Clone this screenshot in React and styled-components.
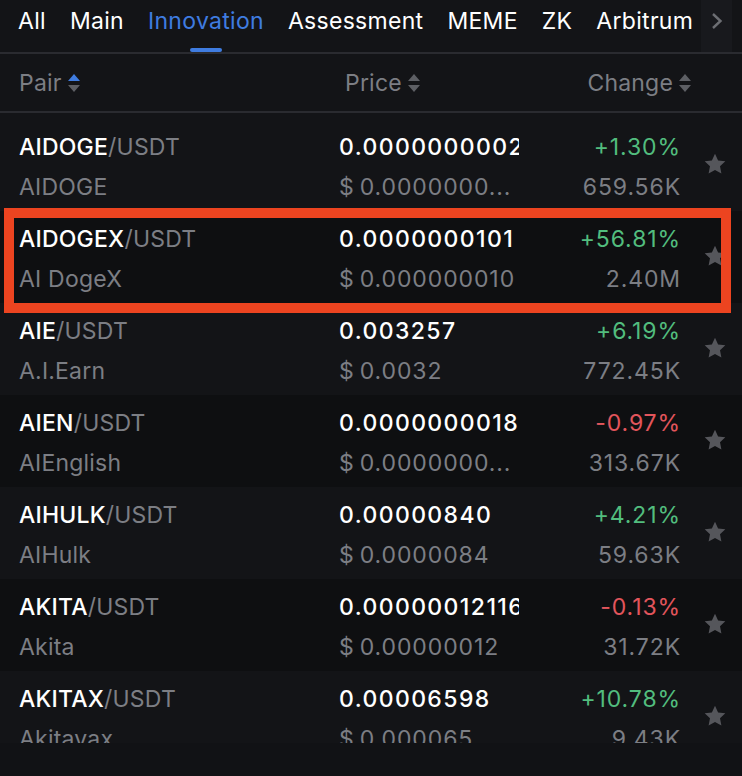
import React from "react";
import styled, { createGlobalStyle } from "styled-components";

const GlobalStyle = createGlobalStyle`
  html, body {
    margin: 0;
    padding: 0;
    background: #131417;
  }
  body {
    font-family: Inter, "Noto Sans", "Liberation Sans", sans-serif;
    -webkit-font-smoothing: antialiased;
  }
`;

const Panel = styled.div`
  width: 742px;
  height: 776px;
  background: #131417;
  color: #ffffff;
  display: flex;
  flex-direction: column;
  overflow: hidden;
`;

const TabBar = styled.div`
  display: flex;
  height: 52px;
  border-bottom: 2px solid #2a2b30;
  flex-shrink: 0;
`;

const TabList = styled.div`
  display: flex;
  gap: 24px;
  padding-left: 18px;
  flex: 1;
  overflow: hidden;
  white-space: nowrap;
`;

const Tab = styled.div`
  position: relative;
  font-size: 23px;
  line-height: 28px;
  padding-top: 7px;
  height: 52px;
  box-sizing: border-box;
  flex-shrink: 0;
  color: ${(p) => (p.$active ? "#3f7ce0" : "#ffffff")};
  letter-spacing: 0.3px;
`;

const TabMark = styled.span`
  position: absolute;
  left: 50%;
  bottom: 0;
  width: 32px;
  height: 4px;
  margin-left: -16px;
  border-radius: 2px;
  background: #3f7ce0;
`;

const ArrowButton = styled.div`
  width: 31px;
  margin-right: 10px;
  background: #18191d;
  display: flex;
  justify-content: center;
  padding-top: 12px;
  box-sizing: border-box;
`;

const HeaderRow = styled.div`
  display: flex;
  align-items: center;
  height: 57px;
  border-bottom: 2px solid #2a2b30;
  flex-shrink: 0;
  padding-left: 19px;
  font-size: 23px;
  letter-spacing: 0.2px;
  color: #7c7e84;
`;

const HeadCell = styled.div`
  display: flex;
  align-items: center;
  gap: 6px;
  width: ${(p) => p.$w}px;
  justify-content: ${(p) => (p.$right ? "flex-end" : "flex-start")};
`;

const List = styled.div`
  height: 630px;
  overflow: hidden;
  padding-top: 6px;
  box-sizing: border-box;
  flex-shrink: 0;
`;

const Row = styled.div`
  position: relative;
  display: flex;
  align-items: flex-start;
  height: 92px;
  box-sizing: border-box;
  padding: 8px 0 4px 19px;
  background: ${(p) => (p.$dark ? "#0e0f11" : "#131417")};
`;

const Col = styled.div`
  display: flex;
  flex-direction: column;
  width: ${(p) => p.$w}px;
  align-items: ${(p) => (p.$right ? "flex-end" : "flex-start")};
  overflow: hidden;
  flex-shrink: 0;
`;

const Line = styled.div`
  height: 40px;
  line-height: 40px;
  font-size: 23px;
  white-space: nowrap;
  overflow: hidden;
  max-width: 100%;
  color: ${(p) => p.$color || "#ffffff"};
  font-weight: ${(p) => p.$weight || 400};
  letter-spacing: ${(p) => p.$spacing || "0.2px"};
`;

const Quote = styled.span`
  color: #7c7e84;
  font-weight: 400;
`;

const StarCell = styled.div`
  align-self: center;
  margin-top: -6px;
  margin-left: 22px;
  display: flex;
`;

const Highlight = styled.div`
  position: absolute;
  top: -3px;
  bottom: -10px;
  left: 4px;
  right: 11px;
  border: 10px solid #ec4420;
  pointer-events: none;
  z-index: 2;
`;

const Footer = styled.div`
  flex: 1;
  background: #111215;
`;

const SortIcon = ({ up }) => (
  <svg width="12" height="20" viewBox="0 0 12 20">
    <path d="M6 1 L12 8 L0 8 Z" fill={up ? "#3f7ce0" : "#5d5f64"} />
    <path d="M0 12 L12 12 L6 19 Z" fill="#5d5f64" />
  </svg>
);

const Star = () => (
  <svg width="24" height="24" viewBox="0 0 24 24">
    <path
      d="M12 1.8l3.1 6.6 7.2.9-5.3 5 1.4 7.1L12 17.9l-6.4 3.5 1.4-7.1-5.3-5 7.2-.9z"
      fill="#55565b"
    />
  </svg>
);

const Chevron = () => (
  <svg width="12" height="18" viewBox="0 0 12 18">
    <path d="M2 2 L9.5 9 L2 16" stroke="#6c6e73" strokeWidth="2.4" fill="none" />
  </svg>
);

const tabs = ["All", "Main", "Innovation", "Assessment", "MEME", "ZK", "Arbitrum"];

const rows = [
  { base: "AIDOGE", name: "AIDOGE", price: "0.0000000002805", usd: "0.0000000...", change: "+1.30%", vol: "659.56K" },
  { base: "AIDOGEX", name: "AI DogeX", price: "0.0000000101", usd: "0.000000010", change: "+56.81%", vol: "2.40M", mark: true },
  { base: "AIE", name: "A.I.Earn", price: "0.003257", usd: "0.0032", change: "+6.19%", vol: "772.45K" },
  { base: "AIEN", name: "AIEnglish", price: "0.0000000018966", usd: "0.0000000...", change: "-0.97%", vol: "313.67K" },
  { base: "AIHULK", name: "AIHulk", price: "0.00000840", usd: "0.0000084", change: "+4.21%", vol: "59.63K" },
  { base: "AKITA", name: "Akita", price: "0.0000001211629", usd: "0.00000012", change: "-0.13%", vol: "31.72K" },
  { base: "AKITAX", name: "Akitavax", price: "0.00006598", usd: "0.000065", change: "+10.78%", vol: "9.43K" },
];

export default function App() {
  return (
    <>
      <GlobalStyle />
      <Panel>
        <TabBar>
          <TabList>
            {tabs.map((t) => (
              <Tab key={t} $active={t === "Innovation"}>
                {t}
                {t === "Innovation" && <TabMark />}
              </Tab>
            ))}
          </TabList>
          <ArrowButton>
            <Chevron />
          </ArrowButton>
        </TabBar>

        <HeaderRow>
          <HeadCell $w={326}>
            Pair <SortIcon up />
          </HeadCell>
          <HeadCell $w={180}>
            Price <SortIcon />
          </HeadCell>
          <HeadCell $w={166} $right>
            Change <SortIcon />
          </HeadCell>
        </HeaderRow>

        <List>
          {rows.map((r, i) => (
            <Row key={r.base} $dark={i % 2 === 1}>
              <Col $w={320}>
                <Line $weight={500}>
                  {r.base}
                  <Quote>/USDT</Quote>
                </Line>
                <Line $color="#7c7e84">{r.name}</Line>
              </Col>
              <Col $w={180}>
                <Line $weight={500} $spacing="1.4px">{r.price}</Line>
                <Line $color="#7c7e84" $spacing="0.9px">{"$\u2009" + r.usd}</Line>
              </Col>
              <Col $w={162} $right>
                <Line $spacing="0.9px" $color={r.change.startsWith("-") ? "#e2555c" : "#52bd7e"}>{r.change}</Line>
                <Line $spacing="0.9px" $color="#7c7e84">{r.vol}</Line>
              </Col>
              <StarCell>
                <Star />
              </StarCell>
              {r.mark && <Highlight />}
            </Row>
          ))}
        </List>
        <Footer />
      </Panel>
    </>
  );
}
